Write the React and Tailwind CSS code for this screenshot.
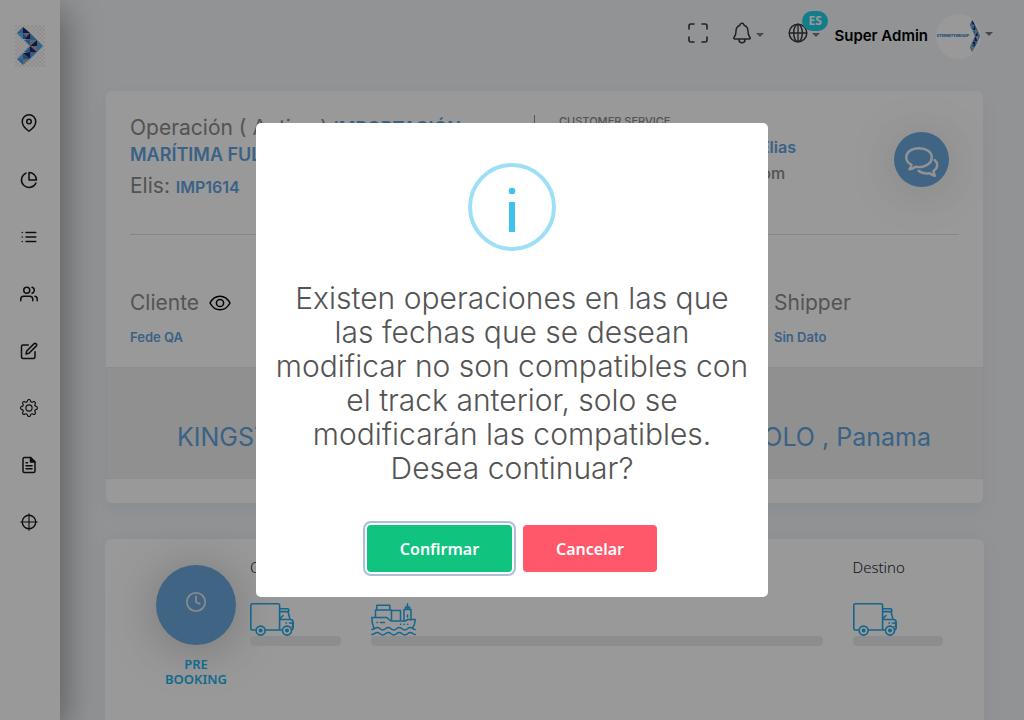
import React from "react";
import {
  FiMapPin,
  FiPieChart,
  FiList,
  FiUsers,
  FiEdit,
  FiMaximize,
  FiClock,
} from "react-icons/fi";
import { BsGear } from "react-icons/bs";
import { IoNotificationsOutline } from "react-icons/io5";

function BrandMark({ className }) {
  return (
    <svg viewBox="0 0 30 42" className={className} preserveAspectRatio="none" aria-hidden="true">
      <defs>
        <pattern id="checks" width="4" height="4" patternUnits="userSpaceOnUse">
          <rect width="4" height="4" fill="#fff" />
          <rect width="2" height="2" fill="#ededed" />
          <rect x="2" y="2" width="2" height="2" fill="#ededed" />
        </pattern>
      </defs>
      <rect width="30" height="42" fill="url(#checks)" />
      <BrandArrow />
    </svg>
  );
}

function BrandArrow() {
  return (
    <g>
      <path d="M2 8 8 2v12z" fill="#4a9be0" />
      <path d="M2 8h6v6z" fill="#68b4f0" />
      <path d="M8 2l7 6H8z" fill="#23235f" />
      <path d="M8 8h7v7z" fill="#9a9eae" />
      <path d="M8 8v6l7 1z" fill="#2f7fc4" />
      <path d="M15 8l-5 6h5z" fill="#23235f" />
      <path d="M15 8v7h7z" fill="#3f93dc" />
      <path d="M9 15h6v6z" fill="#3d8fd8" />
      <path d="M15 15h7l-7 6z" fill="#a3a6b0" />
      <path d="M22 15v6h-7z" fill="#23235f" />
      <path d="M22 15l6 6-6 6z" fill="#56a9ec" />
      <path d="M15 21h7v6z" fill="#a3a6b0" />
      <path d="M15 21v6h7z" fill="#23235f" />
      <path d="M15 21l-6 6h6z" fill="#3d8fd8" />
      <path d="M15 27h7l-7 7z" fill="#4a9be0" />
      <path d="M15 27v7l-7-6z" fill="#23235f" />
      <path d="M8 28l-6 6h6z" fill="#68b4f0" />
      <path d="M8 28v6h7z" fill="#2f7fc4" />
      <path d="M2 34l6 6v-6z" fill="#4a9be0" />
      <path d="M8 34h7l-7 6z" fill="#a3a6b0" />
    </g>
  );
}

function FileIcon({ className }) {
  return (
    <svg viewBox="0 0 24 24" className={className} fill="none" stroke="currentColor" strokeWidth="2" strokeLinejoin="round" strokeLinecap="round" aria-hidden="true">
      <path d="M14 2H6a2 2 0 0 0-2 2v16a2 2 0 0 0 2 2h12a2 2 0 0 0 2-2V8z" />
      <path d="M14 2v6h6z" fill="currentColor" />
      <path d="M8 9h2M8 13h8M8 17h8" />
    </svg>
  );
}

function CrosshairIcon({ className }) {
  return (
    <svg viewBox="0 0 24 24" className={className} fill="none" stroke="currentColor" strokeWidth="1.800" strokeLinecap="round" aria-hidden="true">
      <circle cx="12" cy="12" r="9" />
      <path d="M12 1v22M1 12h22" strokeWidth="1.500" />
    </svg>
  );
}

function GlobeIcon({ className }) {
  return (
    <svg viewBox="0 0 20 20" className={className} fill="none" stroke="currentColor" strokeWidth="1.500" aria-hidden="true">
      <circle cx="10" cy="10" r="8.800" />
      <ellipse cx="10" cy="10" rx="4.300" ry="8.800" />
      <path d="M1.200 10h17.600M10 1.200v17.600" strokeWidth="1.300" />
    </svg>
  );
}

function EyeIcon({ className }) {
  return (
    <svg viewBox="0 0 22 16" className={className} fill="none" stroke="currentColor" strokeWidth="1.500" strokeLinejoin="round" aria-hidden="true">
      <path d="M1 8c2.300-4.300 5.800-6.800 10-6.800S18.700 3.700 21 8c-2.300 4.300-5.800 6.800-10 6.800S3.300 12.300 1 8z" />
      <circle cx="11" cy="8" r="3.600" />
    </svg>
  );
}

function CommentsIcon({ className }) {
  return (
    <svg viewBox="0 0 55 55" className={className} fill="none" stroke="currentColor" strokeWidth="2.400" strokeLinejoin="round" strokeLinecap="round" aria-hidden="true">
      <path d="M25 16.200c-7.200 0-12.800 4-12.800 9.200 0 3.100 2 5.700 5.300 7.400-.3 1.800-1 3.200-2.200 4.600 2.300-.3 4.400-1.200 6.200-2.600 1.100.2 2.300.3 3.500.3 7.200 0 12.800-4.300 12.800-9.700S32.200 16.200 25 16.200z" />
      <path d="M40.600 28c1.700 1.300 2.600 3 2.600 5 0 2.400-1.400 4.500-3.800 6 .2 1.700.7 3 1.600 4.800-2-.3-3.700-1.400-5.200-2.600-4.500.7-8.500-.2-11.300-2.500" />
    </svg>
  );
}

function TruckIcon() {
  return (
    <svg viewBox="0 0 44 33" className="h-[33px] w-11 text-[#26a9ea]" fill="none" stroke="currentColor" strokeWidth="1.600" strokeLinejoin="round" strokeLinecap="round" aria-hidden="true">
      <path d="M5.500 27H2.200a1.400 1.400 0 0 1-1.400-1.400V2.200A1.400 1.400 0 0 1 2.200.8h26a1.400 1.400 0 0 1 1.400 1.400V27M15.500 27h16.500" />
      <path d="M29.700 5.800h8a1 1 0 0 1 1 1v1.800h-9M38 8.800l1.800 6.600M30 16.500h10.500a2.600 2.600 0 0 1 2.600 2.600v6.400l-1.200 1.500M30 15.500l3-3" />
      <path d="M36 20h.5M39.500 20H43M42 20.500h1v3h-1" />
      <circle cx="10.600" cy="27.600" r="4.500" />
      <circle cx="10.600" cy="27.600" r="1.200" fill="currentColor" />
      <circle cx="37" cy="27.600" r="4.500" />
      <circle cx="37" cy="27.600" r="1.200" fill="currentColor" />
    </svg>
  );
}

function ShipIcon() {
  return (
    <svg viewBox="0 0 45 33" className="h-[33px] w-[45px] text-[#26a9ea]" fill="none" stroke="currentColor" strokeWidth="1.500" strokeLinejoin="round" strokeLinecap="round" aria-hidden="true">
      <path d="M5.800 7V2.200h13V7M4.500 14V7h16v7M20.500 17V7.500h9V17M33 17V6.500h7V17M36.500.8v5M34.500 6V4h4v2M36.500 12v2" />
      <path d="M3 25.500C1.500 22 .8 18.500.8 14.500h15l4 3.500h14.500l2.500-1.500h7.400c0 3.500-1 6.500-2.700 9" />
      <path d="M6 19.500h.5M9.500 19.500h4M29.500 21.300h.3M33 21.300h.3M36.500 21.300h.3" />
      <path d="M.8 26.500c3 0 3-2 5.500-2s3 2.500 5.500 2.500 3-2.500 5.500-2.500 3 2.500 5.500 2.500 3-2.500 5.500-2.500 3 2.500 5.500 2.500 3-2.500 5.500-2.500 2.500 2 5 2" />
      <path d="M.8 31.500c3 0 3-2 5.500-2s3 2.500 5.500 2.500 3-2.500 5.500-2.500 3 2.500 5.500 2.500 3-2.500 5.500-2.500 3 2.500 5.500 2.500 3-2.500 5.500-2.500 2.500 2 5 2" />
    </svg>
  );
}

function Caret() {
  return (
    <svg viewBox="0 0 8 4" className="h-1 w-2 text-[#74787d]" aria-hidden="true">
      <path d="M0 0h8L4 4z" fill="currentColor" />
    </svg>
  );
}

const navItems = [
  { label: "Tracking", Icon: FiMapPin },
  { label: "Reportes", Icon: FiPieChart },
  { label: "Operaciones", Icon: FiList },
  { label: "Usuarios", Icon: FiUsers },
  { label: "Editar", Icon: FiEdit },
  { label: "Ajustes", Icon: BsGear },
  { label: "Documentos", Icon: FileIcon },
  { label: "Ubicación", Icon: CrosshairIcon },
];

function Sidebar() {
  return (
    <aside className="relative z-10 flex w-[60px] shrink-0 flex-col bg-white pt-[25px] shadow-[4px_10px_36px_rgba(0,0,0,0.4)]">
      <a href="#inicio" aria-label="Inicio" className="ml-[15px] block w-[30px]">
        <BrandMark className="h-[42px] w-[30px]" />
      </a>
      <nav className="mt-[27px] flex flex-col pr-0.5">
        {navItems.map(({ label, Icon }) => (
          <a key={label} href="#menu" aria-label={label} className="flex h-[57px] items-center justify-center text-[#14181c]">
            <Icon className="h-[18px] w-[18px]" />
          </a>
        ))}
      </nav>
    </aside>
  );
}

function Topbar() {
  return (
    <header className="flex h-[72px] shrink-0 items-center justify-end pr-[31px]">
      <button type="button" aria-label="Pantalla completa" className="mr-5 mb-1.5 text-[#343a40]">
        <FiMaximize className="h-6 w-6" strokeWidth={1.6} />
      </button>
      <button type="button" aria-label="Notificaciones" className="mr-6 mb-1.5 flex items-center gap-0.5 text-[#343a40]">
        <IoNotificationsOutline className="h-6 w-6" />
        <span className="mt-1"><Caret /></span>
      </button>
      <button type="button" aria-label="Idioma" className="relative mr-3.5 mb-1.5 flex items-center gap-1 text-[#343a40]">
        <GlobeIcon className="h-5 w-5" />
        <span className="mt-1"><Caret /></span>
        <span className="absolute -top-3 left-3.5 rounded-full bg-[#22cfe8] px-1.5 font-['Noto_Sans',sans-serif] text-xs leading-5 font-bold text-white">ES</span>
      </button>
      <button type="button" className="flex items-center text-black">
        <span className="text-[15px] font-semibold">Super Admin</span>
        <span className="ml-2 flex h-[45px] w-[45px] items-center justify-end rounded-full bg-white">
          <span className="font-['Roboto',sans-serif] text-[4px] font-black text-[#2f7fc4]">ETERNITYGROUP</span>
          <svg viewBox="0 0 30 42" className="h-9 w-3 shrink-0" preserveAspectRatio="none" aria-hidden="true">
            <BrandArrow />
          </svg>
        </span>
        <span className="mb-1 ml-1"><Caret /></span>
      </button>
    </header>
  );
}

function OperationCard() {
  return (
    <section className="mr-[41px] ml-[46px] shrink-0 rounded-md bg-white pb-6 shadow-[0_8px_20px_rgba(18,38,63,0.05)]">
      <div className="mx-6 flex h-36 border-b border-[#dcdfe3] pt-6">
        <div className="w-[405px] shrink-0 border-r border-[#8c8c8c] pr-14 text-[21px] leading-[25px] text-[#8a8a8a]">
          <h1>
            Operación ( Activa ){" "}
            <span className="text-lg leading-[25px] font-semibold text-[#62a3de]">IMPORTACIÓN MARÍTIMA FULL</span>
          </h1>
          <p className="mt-1.5">
            Elis: <span className="text-base leading-[25px] font-semibold text-[#62a3de]">IMP1614</span>
          </p>
        </div>
        <div className="min-w-0 flex-1 pl-6 whitespace-nowrap">
          <p className="text-[11px] leading-3 font-medium text-[#8a8a8a]">CUSTOMER SERVICE</p>
          <p className="mt-2 text-base leading-6 font-semibold text-[#62a3de]">Maria Fernanda Gonzalez Elias</p>
          <p className="text-base leading-7 font-medium text-[#8a8a8a]">customerservice@cargo.com</p>
        </div>
        <button type="button" aria-label="Chat" className="mt-[17px] mr-2.5 h-[55px] w-[55px] shrink-0 rounded-full bg-[#6ca7dc] text-[#f4f4f4] shadow-[0_4px_50px_rgba(0,0,0,0.15)]">
          <CommentsIcon className="h-[55px] w-[55px]" />
        </button>
      </div>
      <div className="mx-6 flex h-[132px] justify-between pt-14">
        <div>
          <h2 className="flex items-center gap-2.5 text-[21px] leading-6 text-[#8c8c8c]">
            Cliente
            <button type="button" aria-label="Ver cliente" className="text-black">
              <EyeIcon className="h-4 w-[22px]" />
            </button>
          </h2>
          <p className="mt-3 text-[13px] leading-5 font-semibold text-[#62a3de]">Fede QA</p>
        </div>
        <div className="w-[185px]">
          <h2 className="text-[21px] leading-6 text-[#8c8c8c]">Shipper</h2>
          <p className="mt-3 text-[13px] leading-5 font-semibold text-[#62a3de]">Sin Dato</p>
        </div>
      </div>
      <div className="flex h-28 justify-between border border-[#ebebeb] bg-[#f1f1f1] pt-[51px] pr-[51px] pl-[70px] text-[25px] leading-9 text-[#62a3de]">
        <span>KINGSTON , Jamaica</span>
        <span>COLO , Panama</span>
      </div>
    </section>
  );
}

function TrackStep({ label, children }) {
  return (
    <div className="pr-4 pl-3.5">
      <p className="h-12 font-['Noto_Sans',sans-serif] text-[15px] leading-6 font-light text-[#212529]">{label}</p>
      {children}
      <div className="h-2.5 rounded bg-[#e9ecef]" />
    </div>
  );
}

function TrackingCard() {
  return (
    <section className="mt-9 mr-10 ml-[45px] flex h-80 shrink-0 rounded-md bg-white pt-4 pr-[25px] pl-[51px] shadow-[0_0_20px_rgba(18,38,63,0.05)]">
      <div className="w-20 shrink-0 pt-2.5 text-center">
        <div className="flex h-20 w-20 items-center justify-center rounded-full bg-[#6ca7dc] pb-1.5 text-[#dfe6ec] shadow-[0_4px_50px_rgba(0,0,0,0.25)]">
          <FiClock className="h-[22px] w-[22px]" />
        </div>
        <p className="mt-3 font-['Noto_Sans',sans-serif] text-[13px] leading-[15px] font-semibold text-[#1cb0ee]">PRE BOOKING</p>
      </div>
      <div className="grid flex-1 grid-cols-[1fr_4fr_1fr]">
        <TrackStep label="Origen"><TruckIcon /></TrackStep>
        <TrackStep label="Tránsito"><ShipIcon /></TrackStep>
        <TrackStep label="Destino"><TruckIcon /></TrackStep>
      </div>
    </section>
  );
}

const messageLines = [
  "Existen operaciones en las que",
  "las fechas que se desean",
  "modificar no son compatibles con",
  "el track anterior, solo se",
  "modificarán las compatibles.",
  "Desea continuar?",
];

function ConfirmDialog() {
  return (
    <div className="fixed inset-0 z-20 flex items-center justify-center bg-black/40">
      <div role="dialog" aria-modal="true" aria-labelledby="dialog-title" className="flex w-[512px] flex-col items-center rounded-[5px] bg-white px-5 pt-10 pb-[25px]">
        <svg viewBox="0 0 88 88" className="h-[88px] w-[88px]" aria-hidden="true">
          <circle cx="44" cy="44" r="42" fill="none" stroke="#9de0f6" strokeWidth="4" />
          <circle cx="44" cy="28" r="3.300" fill="#3fc3ee" />
          <path d="M41 39h6v30h-6z" fill="#3fc3ee" />
        </svg>
        <h2 id="dialog-title" className="mt-[30px] text-center text-[30px] leading-[34px] font-light text-[#545454]">
          {messageLines.map((line) => (
            <span key={line} className="block whitespace-nowrap">{line} </span>
          ))}
        </h2>
        <div className="mt-10 flex gap-[11px] font-['Noto_Sans',sans-serif] text-base font-semibold text-white">
          <button type="button" className="h-[47px] w-[145px] rounded bg-[#10c480] shadow-[0_0_0_2px_#fff,0_0_0_4px_#aac0d8]">Confirmar</button>
          <button type="button" className="h-[47px] w-[134px] rounded bg-[#ff586b]">Cancelar</button>
        </div>
      </div>
    </div>
  );
}

export default function App() {
  return (
    <div className="flex h-screen overflow-hidden bg-[#f2f5f8] font-['Inter',sans-serif]">
      <Sidebar />
      <main className="flex min-w-0 flex-1 flex-col">
        <Topbar />
        <div className="flex flex-col pt-[19px]">
          <OperationCard />
          <TrackingCard />
        </div>
      </main>
      <ConfirmDialog />
    </div>
  );
}
